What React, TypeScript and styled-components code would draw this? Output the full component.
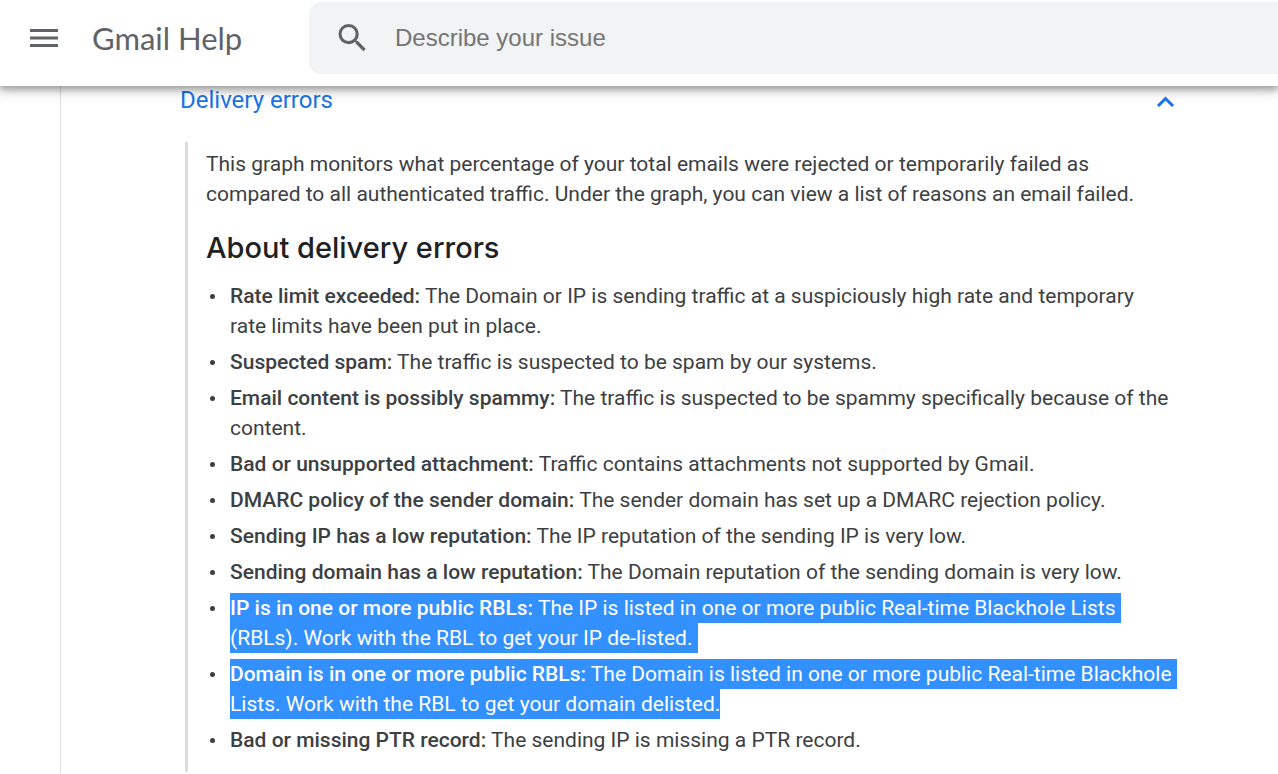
import React from 'react';
import styled, { createGlobalStyle } from 'styled-components';

const GlobalStyle = createGlobalStyle`
  * { box-sizing: border-box; }
  body { margin: 0; background: #fff; color: #3c4043; font-family: Roboto, "Liberation Sans", sans-serif; overflow-x: hidden; }
`;

const Page = styled.div`
  display: flex;
  flex-direction: column;
  min-height: 100vh;
`;

const Header = styled.header`
  position: relative;
  display: flex;
  height: 86px;
  padding: 2px 0 12px 30px;
  background: #fff;
  box-shadow: 0 2px 8px 1px rgba(0, 0, 0, 0.35), 0 2px 14px 2px rgba(0, 0, 0, 0.15);
`;

const MenuButton = styled.button`
  display: flex;
  align-items: center;
  width: 28px;
  padding: 0;
  border: 0;
  background: none;
  color: #5f6368;
`;

const Brand = styled.a`
  width: 217px;
  margin-left: 34px;
  flex: none;
  align-self: center;
  color: #5f6368;
  font: 400 31px/40px Lato, sans-serif;
  text-decoration: none;
`;

const SearchBar = styled.label`
  display: flex;
  flex: 1;
  align-items: center;
  gap: 28px;
  padding-left: 29px;
  border-radius: 12px 0 0 12px;
  background: #f1f3f4;
  color: #5f6368;
`;

const SearchInput = styled.input`
  flex: 1;
  min-width: 0;
  padding: 0;
  border: 0;
  outline: 0;
  background: none;
  font: 400 24px/32px "Liberation Sans", Arial, sans-serif;
  color: #3c4043;
  &::placeholder { color: #757575; opacity: 1; }
`;

const Content = styled.main`
  flex: 1;
  margin-left: 60px;
  padding: 0 103px 2px 119px;
  border-left: 1px solid #dadce0;
`;

const SectionToggle = styled.button`
  display: flex;
  width: 100%;
  justify-content: space-between;
  align-items: center;
  padding: 0;
  border: 0;
  background: none;
  color: #1a73e8;
  font: 400 24px/28px Roboto, sans-serif;
`;

const Panel = styled.section`
  margin: 28px 0 0 5px;
  padding: 7px 0 17px 18px;
  border-left: 3px solid #dadce0;
  font-size: 21px;
  line-height: 30px;
`;

const Intro = styled.p`
  margin: 0;
`;

const Title = styled.h2`
  margin: 20px 0 14px;
  color: #202124;
  font: 500 29px/38px Inter, sans-serif;
`;

const ReasonList = styled.ul`
  display: flex;
  flex-direction: column;
  gap: 6px;
  margin: 0;
  padding: 0;
  list-style: none;
`;

const Reason = styled.li`
  display: flex;
  &::before {
    content: "";
    flex: none;
    width: 5px;
    height: 5px;
    margin: 13px 15px 0 4px;
    border-radius: 50%;
    background: #3c4043;
  }
`;

const Term = styled.strong`
  font-weight: 500;
`;

const Passage = styled.span<{ $selected?: boolean }>`
  padding: ${(p) => (p.$selected ? '3px 0' : '0')};
  background: ${(p) => (p.$selected ? '#3390ff' : 'none')};
  color: ${(p) => (p.$selected ? '#fff' : 'inherit')};
  white-space: pre-wrap;
`;

const reasons = [
  { term: 'Rate limit exceeded:', text: 'The Domain or IP is sending traffic at a suspiciously high rate and temporary rate limits have been put in place.' },
  { term: 'Suspected spam:', text: 'The traffic is suspected to be spam by our systems.' },
  { term: 'Email content is possibly spammy:', text: 'The traffic is suspected to be spammy specifically because of the content.' },
  { term: 'Bad or unsupported attachment:', text: 'Traffic contains attachments not supported by Gmail.' },
  { term: 'DMARC policy of the sender domain:', text: 'The sender domain has set up a DMARC rejection policy.' },
  { term: 'Sending IP has a low reputation:', text: 'The IP reputation of the sending IP is very low.' },
  { term: 'Sending domain has a low reputation:', text: 'The Domain reputation of the sending domain is very low.' },
  { term: 'IP is in one or more public RBLs:', text: 'The IP is listed in one or more public Real-time Blackhole Lists (RBLs). Work with the RBL to get your IP de-listed.\u00a0', selected: true },
  { term: 'Domain is in one or more public RBLs:', text: 'The Domain is listed in one or more public Real-time Blackhole Lists. Work with the RBL to get your domain delisted.', selected: true },
  { term: 'Bad or missing PTR record:', text: 'The sending IP is missing a PTR record.' },
];

export default function App() {
  return (
    <Page>
      <GlobalStyle />
      <Header>
        <MenuButton aria-label="Main menu">
          <svg width="28" height="18" viewBox="0 0 28 18" fill="currentColor">
            <path d="M0 0h28v3H0zM0 7.500h28v3H0zM0 15h28v3H0z" />
          </svg>
        </MenuButton>
        <Brand href="#">Gmail Help</Brand>
        <SearchBar>
          <svg width="29" height="28" viewBox="3 3 18 18" fill="currentColor">
            <path d="M15.5 14h-.79l-.28-.27A6.47 6.47 0 0 0 16 9.500 6.500 6.500 0 1 0 9.500 16c1.610 0 3.090-.590 4.230-1.570l.27.28v.79l5 4.990L20.490 19l-4.990-5zm-6 0C7.010 14 5 11.990 5 9.500S7.010 5 9.500 5 14 7.010 14 9.500 11.990 14 9.500 14z" />
          </svg>
          <SearchInput type="text" aria-label="Describe your issue" placeholder="Describe your issue" />
        </SearchBar>
      </Header>
      <Content>
        <SectionToggle aria-expanded="true">
          Delivery errors
          <svg width="19" height="14" viewBox="0 0 19 14" fill="none" stroke="currentColor" strokeWidth="3">
            <path d="M2 13l7.500-7.500 7.500 7.500" />
          </svg>
        </SectionToggle>
        <Panel>
          <Intro>
            This graph monitors what percentage of your total emails were rejected or temporarily failed as compared to all authenticated traffic. Under the graph, you can view a list of reasons an email failed.
          </Intro>
          <Title>About delivery errors</Title>
          <ReasonList>
            {reasons.map((r) => (
              <Reason key={r.term}>
                <div>
                  <Passage $selected={r.selected}>
                    <Term>{r.term}</Term> {r.text}
                  </Passage>
                </div>
              </Reason>
            ))}
          </ReasonList>
        </Panel>
      </Content>
    </Page>
  );
}
